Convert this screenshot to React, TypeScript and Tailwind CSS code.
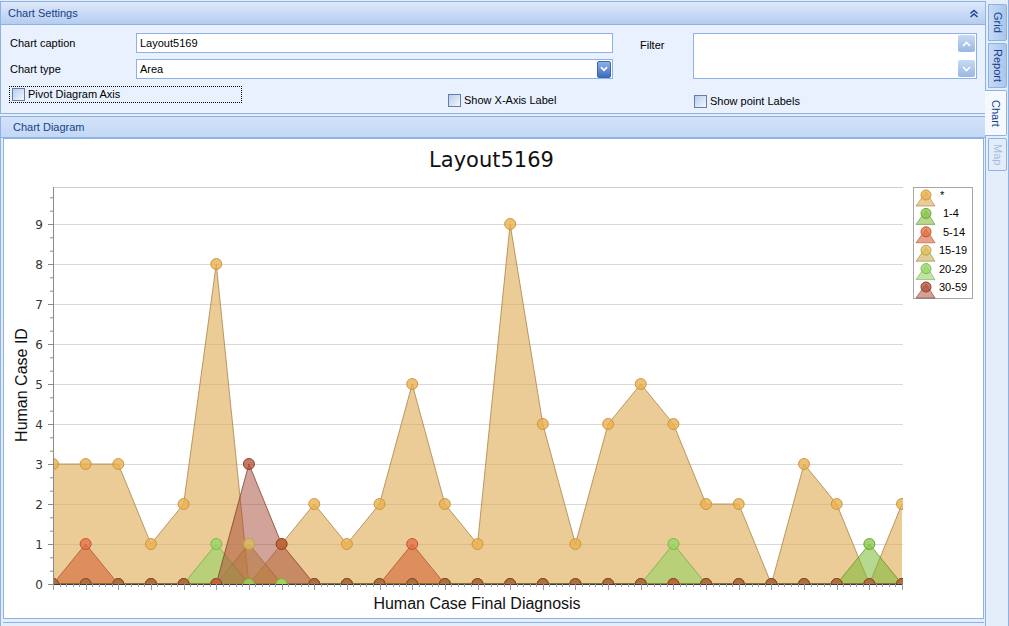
import React from "react";

const N = 27;
const X0 = 53;
const X1 = 902;
const Y0 = 585;
const DY = 40;
const TOP = 188;
const RIGHT = 903;

const px = (i: number) => X0 + (i * (X1 - X0)) / (N - 1);
const py = (v: number) => Y0 - v * DY;
const spikes = (m: Record<number, number>) => Array.from({ length: N }, (_, i) => m[i] ?? 0);

type Series = { name: string; data: number[]; area: string; line: string; dot: string; ring: string; tx: number };

const series: Series[] = [
  { name: "*", data: [3, 3, 3, 1, 2, 8, 0, 1, 2, 1, 2, 5, 2, 1, 9, 4, 1, 4, 5, 4, 2, 2, 0, 3, 2, 0, 2], area: "rgba(222,170,82,0.6)", line: "rgba(165,125,60,0.75)", dot: "rgba(234,176,80,0.8)", ring: "rgba(205,150,55,0.95)", tx: 940 },
  { name: "1-4", data: spikes({ 25: 1 }), area: "rgba(120,186,51,0.55)", line: "rgba(95,140,35,0.75)", dot: "rgba(135,195,70,0.75)", ring: "rgba(100,165,40,0.95)", tx: 943 },
  { name: "5-14", data: spikes({ 1: 1, 11: 1 }), area: "rgba(214,99,53,0.6)", line: "rgba(170,80,45,0.75)", dot: "rgba(225,110,70,0.75)", ring: "rgba(195,80,45,0.95)", tx: 943 },
  { name: "15-19", data: spikes({ 6: 1 }), area: "rgba(200,175,80,0.6)", line: "rgba(150,130,50,0.75)", dot: "rgba(222,190,95,0.75)", ring: "rgba(190,160,60,0.95)", tx: 939 },
  { name: "20-29", data: spikes({ 5: 1, 19: 1 }), area: "rgba(150,210,100,0.6)", line: "rgba(110,170,70,0.75)", dot: "rgba(150,215,100,0.75)", ring: "rgba(115,185,70,0.95)", tx: 939 },
  { name: "30-59", data: spikes({ 6: 3, 7: 1 }), area: "rgba(165,72,52,0.5)", line: "rgba(130,55,40,0.75)", dot: "rgba(175,80,55,0.75)", ring: "rgba(145,55,35,0.95)", tx: 939 },
];

function Chart() {
  const yMinor: number[] = [];
  for (let k = 0; k * (DY / 3) <= Y0 - TOP; k++) yMinor.push(k);
  const xMinor: number[] = [];
  for (let i = 0; i < N - 1; i++) for (let j = 1; j < 5; j++) xMinor.push(px(i) + (j * (px(1) - px(0))) / 5);

  return (
    <svg width="979" height="479" viewBox="4 140 979 479" className="block">
      <defs>
        <clipPath id="plot">
          <rect x={X0} y={140} width={RIGHT - X0} height={Y0 - 140} />
        </clipPath>
      </defs>
      <text x="491.5" y="168" textAnchor="middle" fontSize="21" fontFamily="'DejaVu Sans', sans-serif" fill="#111">
        Layout5169
      </text>

      {/* grid */}
      <line x1={X0} y1={TOP + 0.5} x2={RIGHT} y2={TOP + 0.5} stroke="#cfcfcf" />
      {Array.from({ length: 9 }, (_, k) => (
        <line key={k} x1={X0} y1={py(k + 1) + 0.5} x2={RIGHT} y2={py(k + 1) + 0.5} stroke="#d9d9d9" />
      ))}

      {/* areas */}
      {series.map((s) => {
        const pts = s.data.map((v, i) => `${px(i)},${py(v)}`).join(" ");
        return (
          <g key={s.name}>
            <polygon points={`${px(0)},${Y0} ${pts} ${px(N - 1)},${Y0}`} fill={s.area} />
            <polyline points={pts} fill="none" stroke={s.line} strokeWidth="1" />
          </g>
        );
      })}

      {/* markers */}
      <g clipPath="url(#plot)">
        {series.map((s) =>
          s.data.map((v, i) => (
            <circle key={s.name + i} cx={px(i)} cy={py(v)} r="5.5" fill={s.dot} stroke={s.ring} strokeWidth="1" />
          ))
        )}
      </g>

      {/* axes */}
      <line x1={X0 + 0.5} y1={TOP} x2={X0 + 0.5} y2={Y0} stroke="#8a8a8a" />
      {yMinor.map((k) => (
        <line key={k} x1={k % 3 === 0 ? X0 - 5 : X0 - 3} y1={Y0 - k * (DY / 3) + 0.5} x2={X0} y2={Y0 - k * (DY / 3) + 0.5} stroke="#8a8a8a" />
      ))}
      {Array.from({ length: 10 }, (_, v) => (
        <text key={v} x="43" y={py(v) + 4.5} textAnchor="end" fontSize="12" fontFamily="'DejaVu Sans', sans-serif" fill="#333">
          {v}
        </text>
      ))}
      <line x1={X0} y1={Y0 + 0.5} x2={RIGHT} y2={Y0 + 0.5} stroke="#3a3a3a" />
      {Array.from({ length: N }, (_, i) => (
        <line key={i} x1={Math.round(px(i)) + 0.5} y1={Y0} x2={Math.round(px(i)) + 0.5} y2={Y0 + 6} stroke="#9a9a9a" />
      ))}
      {xMinor.map((x, i) => (
        <line key={i} x1={Math.round(x) + 0.5} y1={Y0} x2={Math.round(x) + 0.5} y2={Y0 + 3} stroke="#9a9a9a" />
      ))}

      <text transform="translate(27,386) rotate(-90)" textAnchor="middle" fontSize="16" fontFamily="'Liberation Sans', Arial, sans-serif" fill="#111">
        Human Case ID
      </text>
      <text x="477" y="610" textAnchor="middle" fontSize="16" fontFamily="'Liberation Sans', Arial, sans-serif" fill="#111">
        Human Case Final Diagnosis
      </text>

      {/* legend */}
      <rect x="913.5" y="188.5" width="59" height="111" fill="#fff" stroke="#a6a6a6" />
      {series.map((s, k) => {
        const cy = 196 + k * 18.4;
        return (
          <g key={s.name}>
            <polygon points={`926,${cy - 3} 935,${cy + 11} 916,${cy + 11}`} fill={s.area} stroke={s.line} strokeWidth="0.8" />
            <circle cx="926" cy={cy} r="5" fill={s.dot} stroke={s.ring} />
            <text x={s.tx} y={cy + 4} fontSize="11" fontFamily="'Liberation Sans', Arial, sans-serif" fill="#000">
              {s.name}
            </text>
          </g>
        );
      })}
    </svg>
  );
}

function CheckBox() {
  return <div className="h-[13px] w-[13px] shrink-0 border border-[#5f7fae] bg-gradient-to-br from-[#b9cdea] to-[#f3f7fd]" />;
}

function Tab({ label, h, active, disabled }: { label: string; h: string; active?: boolean; disabled?: boolean }) {
  return (
    <div
      className={`flex items-center justify-center border border-[#8db2e3] ${h} ${
        active ? "-ml-[3px] w-[22px] border-l-0 bg-[#f5f9fe]" : disabled ? "w-[19px] bg-[#e3ecf9]" : "w-[19px] bg-gradient-to-r from-[#c8dbf5] to-[#a9c6ee]"
      } rounded-r-[2px]`}
    >
      <span className={`[writing-mode:vertical-rl] text-[11px] ${disabled ? "text-[#a9bedf]" : "text-[#15428b]"}`}>{label}</span>
    </div>
  );
}

export default function App() {
  return (
    <div className="flex h-[626px] w-[1009px] overflow-hidden bg-[#e4eefb] font-['Liberation_Sans',Arial,sans-serif] text-[11px] text-black">
      <div className="flex w-[986px] shrink-0 flex-col">
        {/* Chart Settings */}
        <section className="mt-px flex h-[113px] flex-col border border-[#8db2e3]">
          <div className="flex h-[23px] items-center justify-between border-b border-[#8db2e3] bg-gradient-to-b from-[#dfe9f9] via-[#c9daf6] to-[#b6cdf0] pl-[7px] pr-[6px] text-[#15428b]">
            <span>Chart Settings</span>
            <svg width="10" height="9" viewBox="0 0 10 9">
              <path d="M1.5 4.5 L5 1.5 L8.5 4.5 M1.5 8 L5 5 L8.5 8" fill="none" stroke="#15428b" strokeWidth="1.4" />
            </svg>
          </div>
          <div className="flex-1 bg-[#e8f1fd]">
            <div className="flex pt-[8px]">
              <div className="flex flex-col gap-[6px] pl-[9px]">
                <div className="flex h-[20px] items-center">
                  <span className="w-[126px]">Chart caption</span>
                  <div className="flex h-[20px] w-[477px] items-center border border-[#8eb1e6] bg-white pl-[3px]">Layout5169</div>
                </div>
                <div className="flex h-[20px] items-center">
                  <span className="w-[126px]">Chart type</span>
                  <div className="flex h-[20px] w-[477px] items-center justify-between border border-[#8eb1e6] bg-white pl-[3px] pr-px">
                    <span>Area</span>
                    <div className="flex h-[17px] w-[14px] items-center justify-center rounded-[2px] border border-[#3d67ae] bg-gradient-to-b from-[#8db2ea] to-[#3d6bc0]">
                      <svg width="8" height="6" viewBox="0 0 8 6">
                        <path d="M1 1.2 L4 4.3 L7 1.2" fill="none" stroke="#fff" strokeWidth="1.8" />
                      </svg>
                    </div>
                  </div>
                </div>
              </div>
              <span className="ml-[27px] mt-[4px] w-[53px]">Filter</span>
              <div className="flex h-[46px] w-[284px] flex-col items-end justify-between border border-[#8eb1e6] bg-white py-px pr-px">
                <div className="flex h-[17px] w-[17px] items-center justify-center rounded-[2px] bg-gradient-to-b from-[#c8daf3] to-[#98b7e2]">
                  <svg width="9" height="6" viewBox="0 0 9 6">
                    <path d="M1 5 L4.5 1.5 L8 5" fill="none" stroke="#fff" strokeWidth="1.6" />
                  </svg>
                </div>
                <div className="flex h-[17px] w-[17px] items-center justify-center rounded-[2px] bg-gradient-to-b from-[#c8daf3] to-[#98b7e2]">
                  <svg width="9" height="6" viewBox="0 0 9 6">
                    <path d="M1 1 L4.5 4.5 L8 1" fill="none" stroke="#fff" strokeWidth="1.6" />
                  </svg>
                </div>
              </div>
            </div>
            <div className="mt-[7px] flex items-start">
              <div className="ml-[8px] flex h-[17px] w-[233px] items-center border border-dotted border-black pl-[2px]">
                <CheckBox />
                <span className="ml-[3px]">Pivot Diagram Axis</span>
              </div>
              <div className="ml-[206px] mt-[6px] flex w-[246px] items-center">
                <CheckBox />
                <span className="ml-[3px]">Show X-Axis Label</span>
              </div>
              <div className="mt-[7px] flex items-center">
                <CheckBox />
                <span className="ml-[3px]">Show point Labels</span>
              </div>
            </div>
          </div>
        </section>

        {/* Chart Diagram */}
        <section className="mt-[2px] flex flex-1 flex-col border-x border-t border-[#8db2e3]">
          <div className="flex h-[21px] items-center border-b border-[#8db2e3] bg-gradient-to-b from-[#d3e2f9] to-[#c3d8f6] pl-[12px] text-[#15428b]">
            Chart Diagram
          </div>
          <div className="flex-1 pl-[2px] pr-px">
            <div className="border border-[#8db2e3] bg-white">
              <Chart />
            </div>
            <div className="mt-[3px] border-t border-[#8db2e3]" />
          </div>
        </section>
      </div>

      {/* side tabs */}
      <div className="flex w-[23px] flex-col border-r border-[#8db2e3] pl-[2px] pt-[4px]">
        <div className="flex flex-col gap-[2px]">
          <Tab label="Grid" h="h-[37px]" />
          <Tab label="Report" h="h-[45px]" />
          <Tab label="Chart" h="h-[46px]" active />
          <Tab label="Map" h="h-[33px]" disabled />
        </div>
      </div>
    </div>
  );
}
